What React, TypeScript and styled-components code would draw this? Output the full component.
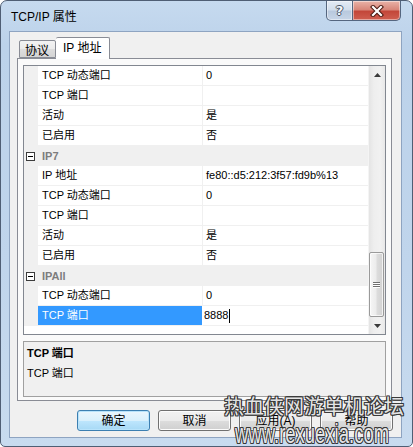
import React from "react";
import styled, { createGlobalStyle } from "styled-components";

const Global = createGlobalStyle`
  html, body { margin: 0; padding: 0; background: #ffffff; }
  body {
    font-family: "Liberation Sans", "Noto Sans CJK SC", sans-serif;
    font-size: 11px;
    color: #000;
  }
  * { box-sizing: border-box; }
`;

const Window = styled.div`
  position: relative;
  width: 413px;
  height: 447px;
  border: 1px solid #4f5e74;
  border-radius: 7px 7px 5px 5px;
  background: linear-gradient(180deg, #c6daef 0%, #bcd2ea 10%, #c0d5ec 60%, #c8dbef 100%);
  padding: 0 10px 8px 8px;
  display: flex;
  flex-direction: column;
  overflow: hidden;
`;

const TitleBar = styled.div`
  height: 30px;
  display: flex;
  justify-content: space-between;
  align-items: flex-start;
  flex-shrink: 0;
`;

const TitleText = styled.div`
  margin: 8px 0 0 2px;
  font-size: 12px;
  line-height: 16px;
  color: #000;
`;

const CaptionGroup = styled.div`
  display: flex;
  margin-right: 1px;
`;

const CaptionButton = styled.div<{ $kind: "help" | "close" }>`
  height: 20px;
  width: ${(p) => (p.$kind === "close" ? 48 : 27)}px;
  border: 1px solid #55667f;
  border-top: none;
  border-left-width: ${(p) => (p.$kind === "close" ? 0 : 1)}px;
  border-radius: ${(p) => (p.$kind === "close" ? "0 0 5px 0" : "0 0 0 5px")};
  background: ${(p) =>
    p.$kind === "close"
      ? "linear-gradient(180deg, #e9b3a8 0%, #d8877a 45%, #c3473a 55%, #cf5f50 100%)"
      : "linear-gradient(180deg, #e3ebf5 0%, #d2deec 45%, #b9c9de 55%, #c7d5e7 100%)"};
  box-shadow: inset 0 0 0 1px rgba(255, 255, 255, 0.45);
  display: flex;
  align-items: center;
  justify-content: center;
`;

const HelpGlyph = styled.span`
  font-family: "DejaVu Sans", sans-serif;
  font-weight: bold;
  font-size: 13px;
  line-height: 13px;
  color: #f4f7fb;
  text-shadow: 1px 0 0 #4a5568, -1px 0 0 #4a5568, 0 1px 0 #4a5568, 0 -1px 0 #4a5568;
`;

const Client = styled.div`
  flex: 1;
  background: #f0f0f0;
  border: 1px solid #8ea4c1;
  padding: 5px 9px 0 7px;
  display: flex;
  flex-direction: column;
`;

const TabStrip = styled.div`
  height: 22px;
  margin-bottom: -1px;
  padding-left: 2px;
  display: flex;
  align-items: flex-end;
  position: relative;
  z-index: 1;
`;

const Tab = styled.div<{ $active?: boolean }>`
  height: ${(p) => (p.$active ? 22 : 18)}px;
  margin-bottom: ${(p) => (p.$active ? 0 : 1)}px;
  padding: ${(p) => (p.$active ? "2px 8px 0 7px" : "2px 6px 0 5px")};
  border: 1px solid #898c95;
  border-bottom: ${(p) => (p.$active ? "none" : "1px solid #898c95")};
  border-left-width: ${(p) => (p.$active ? 0 : 1)}px;
  border-radius: 2px 2px 0 0;
  background: ${(p) =>
    p.$active ? "#ffffff" : "linear-gradient(180deg, #f3f3f3 0%, #ebebeb 50%, #dddddd 51%, #d4d4d4 100%)"};
  font-size: 12px;
  line-height: 16px;
  white-space: nowrap;
`;

const Panel = styled.div`
  border: 1px solid #898c95;
  background: #fafafa;
  padding: 6px 5px 3px 5px;
  display: flex;
  flex-direction: column;
  gap: 6px;
`;

const Grid = styled.div`
  height: 270px;
  border: 1px solid #828790;
  background: #ffffff;
  display: flex;
`;

const Rows = styled.div`
  flex: 1;
  display: flex;
  flex-direction: column;
`;

const Row = styled.div`
  display: flex;
  height: 20px;
  flex-shrink: 0;
`;

const Gutter = styled.div`
  width: 14px;
  background: #f0f0f0;
  display: flex;
  align-items: center;
  justify-content: center;
  padding-right: 1px;
`;

const ExpandBox = styled.div`
  width: 9px;
  height: 9px;
  border: 1px solid #3c3c3c;
  background: #ffffff;
  display: flex;
  align-items: center;
  justify-content: center;
  &::after {
    content: "";
    width: 5px;
    height: 1px;
    background: #000;
  }
`;

const Label = styled.div<{ $selected?: boolean }>`
  width: 165px;
  padding-left: 4px;
  border-right: 1px solid #f0f0f0;
  border-bottom: 1px solid #f0f0f0;
  line-height: 19px;
  white-space: nowrap;
  background: ${(p) => (p.$selected ? "#3399ff" : "#ffffff")};
  color: ${(p) => (p.$selected ? "#ffffff" : "#000000")};
  border-right-color: ${(p) => (p.$selected ? "#ffffff" : "#f0f0f0")};
`;

const Value = styled.div<{ $editing?: boolean }>`
  flex: 1;
  padding-left: ${(p) => (p.$editing ? 1 : 3)}px;
  border-bottom: 1px solid #f0f0f0;
  line-height: 19px;
  white-space: nowrap;
  display: flex;
  align-items: center;
`;

const Caret = styled.span`
  display: inline-block;
  width: 1px;
  height: 14px;
  background: #000;
  margin-left: 1px;
`;

const CategoryCell = styled.div`
  flex: 1;
  background: #f0f0f0;
  padding-left: 4px;
  line-height: 20px;
  font-weight: bold;
  color: #7d7d7d;
`;

const ScrollBar = styled.div`
  width: 17px;
  display: flex;
  flex-direction: column;
  background: linear-gradient(90deg, #e4e4e4 0%, #eeeeee 30%, #f1f1f1 70%, #e8e8e8 100%);
  border-left: 1px solid #f4f4f4;
`;

const ScrollArrow = styled.div`
  height: 17px;
  flex-shrink: 0;
  display: flex;
  align-items: center;
  justify-content: center;
`;

const Track = styled.div`
  flex: 1;
  display: flex;
  flex-direction: column;
  justify-content: flex-end;
`;

const Thumb = styled.div`
  height: 65px;
  margin: 0 1px 0 0;
  border: 1px solid #9a9a9a;
  border-radius: 2px;
  background: linear-gradient(90deg, #f6f6f6 0%, #ececec 45%, #dcdcdc 55%, #d2d2d2 100%);
  box-shadow: inset 0 0 0 1px rgba(255, 255, 255, 0.7);
  display: flex;
  flex-direction: column;
  align-items: center;
  justify-content: center;
  gap: 1px;
`;

const Grip = styled.div`
  width: 7px;
  height: 1px;
  background: #6f6f6f;
  box-shadow: 0 1px 0 #ffffff;
`;

const Desc = styled.div`
  height: 56px;
  border: 1px solid #a0a0a0;
  background: #f0f0f0;
  padding: 1px 3px 0 3px;
`;

const DescTitle = styled.div`
  font-weight: bold;
  line-height: 20px;
`;

const DescText = styled.div`
  line-height: 20px;
`;

const ButtonRow = styled.div`
  margin-top: 9px;
  margin-right: -1px;
  display: flex;
  justify-content: flex-end;
  gap: 8px;
`;

const Button = styled.div<{ $default?: boolean }>`
  width: 73px;
  height: 21px;
  border: 1px solid ${(p) => (p.$default ? "#3c7fb1" : "#707070")};
  border-radius: 3px;
  background: ${(p) =>
    p.$default
      ? "linear-gradient(180deg, #eaf6fd 0%, #d9f0fc 50%, #bee6fd 51%, #a7d9f5 100%)"
      : "linear-gradient(180deg, #f2f2f2 0%, #ebebeb 50%, #dddddd 51%, #cfcfcf 100%)"};
  box-shadow: inset 0 0 0 1px ${(p) => (p.$default ? "#b8e3fb" : "#fcfcfc")};
  display: flex;
  align-items: center;
  justify-content: center;
  font-size: 12px;
  line-height: 16px;
`;

const Watermark = styled.div<{ $line: 1 | 2 }>`
  position: absolute;
  left: ${(p) => (p.$line === 1 ? 223 : 234)}px;
  top: ${(p) => (p.$line === 1 ? 395 : 419)}px;
  font-family: ${(p) =>
    p.$line === 1 ? '"Noto Sans CJK SC", sans-serif' : '"Liberation Sans", sans-serif'};
  font-size: ${(p) => (p.$line === 1 ? 20 : 28)}px;
  line-height: 1;
  white-space: nowrap;
  color: rgba(255, 255, 255, 0.9);
  opacity: 0.92;
  transform: scaleX(${(p) => (p.$line === 1 ? 1 : 0.66)});
  transform-origin: left top;
  text-shadow: 1px 0 0 #2b2b2b, -1px 0 0 #2b2b2b, 0 1px 0 #2b2b2b, 0 -1px 0 #2b2b2b,
    1px 1px 0 #2b2b2b, -1px -1px 0 #2b2b2b, 1px -1px 0 #2b2b2b, -1px 1px 0 #2b2b2b;
  pointer-events: none;
`;

type Item =
  | { kind: "cat"; name: string }
  | { kind: "prop"; label: string; value: string; selected?: boolean };

const items: Item[] = [
  { kind: "prop", label: "TCP 动态端口", value: "0" },
  { kind: "prop", label: "TCP 端口", value: "" },
  { kind: "prop", label: "活动", value: "是" },
  { kind: "prop", label: "已启用", value: "否" },
  { kind: "cat", name: "IP7" },
  { kind: "prop", label: "IP 地址", value: "fe80::d5:212:3f57:fd9b%13" },
  { kind: "prop", label: "TCP 动态端口", value: "0" },
  { kind: "prop", label: "TCP 端口", value: "" },
  { kind: "prop", label: "活动", value: "是" },
  { kind: "prop", label: "已启用", value: "否" },
  { kind: "cat", name: "IPAll" },
  { kind: "prop", label: "TCP 动态端口", value: "0" },
  { kind: "prop", label: "TCP 端口", value: "8888", selected: true },
];

const Arrow = ({ up }: { up?: boolean }) => (
  <svg width="7" height="4" viewBox="0 0 7 4">
    <path d={up ? "M0 4 L3.5 0 L7 4 Z" : "M0 0 L3.5 4 L7 0 Z"} fill="#3a3a3a" />
  </svg>
);

const CloseGlyph = () => (
  <svg width="14" height="12" viewBox="0 0 14 12">
    <path d="M3 2 L11 10 M11 2 L3 10" stroke="#4a1a12" strokeWidth="4.2" strokeLinecap="square" />
    <path d="M3 2 L11 10 M11 2 L3 10" stroke="#ffffff" strokeWidth="2.2" strokeLinecap="square" />
  </svg>
);

export default function App() {
  return (
    <>
      <Global />
      <Window>
        <TitleBar>
          <TitleText>TCP/IP 属性</TitleText>
          <CaptionGroup>
            <CaptionButton $kind="help">
              <HelpGlyph>?</HelpGlyph>
            </CaptionButton>
            <CaptionButton $kind="close">
              <CloseGlyph />
            </CaptionButton>
          </CaptionGroup>
        </TitleBar>
        <Client>
          <TabStrip>
            <Tab>协议</Tab>
            <Tab $active>IP 地址</Tab>
          </TabStrip>
          <Panel>
            <Grid>
              <Rows>
                {items.map((it, i) =>
                  it.kind === "cat" ? (
                    <Row key={i}>
                      <Gutter>
                        <ExpandBox />
                      </Gutter>
                      <CategoryCell>{it.name}</CategoryCell>
                    </Row>
                  ) : (
                    <Row key={i}>
                      <Gutter />
                      <Label $selected={it.selected}>{it.label}</Label>
                      <Value $editing={it.selected}>
                        {it.value}
                        {it.selected && <Caret />}
                      </Value>
                    </Row>
                  )
                )}
              </Rows>
              <ScrollBar>
                <ScrollArrow>
                  <Arrow up />
                </ScrollArrow>
                <Track>
                  <Thumb>
                    <Grip />
                    <Grip />
                    <Grip />
                  </Thumb>
                </Track>
                <ScrollArrow>
                  <Arrow />
                </ScrollArrow>
              </ScrollBar>
            </Grid>
            <Desc>
              <DescTitle>TCP 端口</DescTitle>
              <DescText>TCP 端口</DescText>
            </Desc>
          </Panel>
          <ButtonRow>
            <Button $default>确定</Button>
            <Button>取消</Button>
            <Button>应用(A)</Button>
            <Button>帮助</Button>
          </ButtonRow>
        </Client>
        <Watermark $line={1}>热血侠网游单机论坛</Watermark>
        <Watermark $line={2}>www.rexuexia.com</Watermark>
      </Window>
    </>
  );
}
